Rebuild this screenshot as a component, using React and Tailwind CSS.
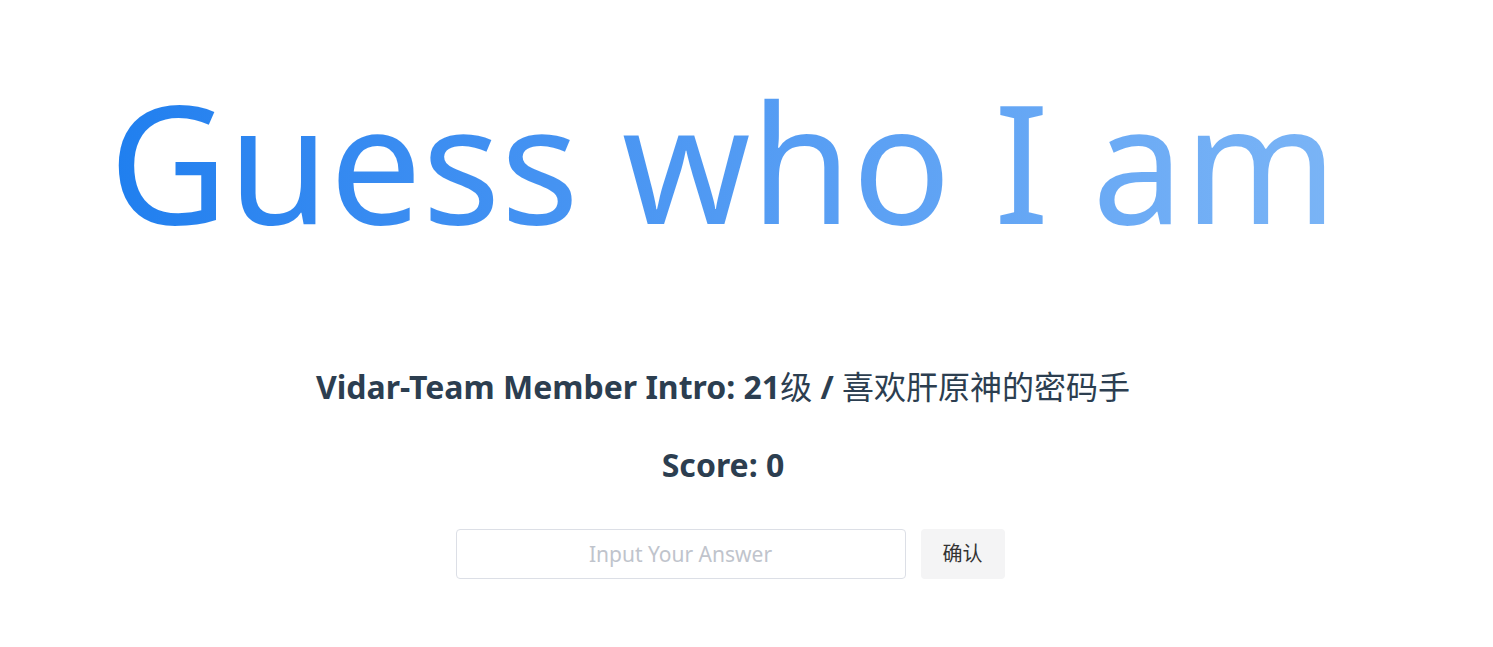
import React, { useState } from 'react';

const App = () => {
  const [answer, setAnswer] = useState('');

  return (
    <div
      className="w-[1446px] text-center text-[#2c3e50]"
      style={{ fontFamily: '"Noto Sans", "Noto Sans CJK SC", sans-serif' }}
    >
      <div className="pt-[63px] h-[300px]">
        <h1 className="text-[164px] leading-[1.2] font-normal inline-block bg-gradient-to-r from-[#1f7fef] to-[#7ab4f6] bg-clip-text text-transparent">
          Guess who I am
        </h1>
      </div>
      <h2 className="mt-[62px] text-[32px] font-bold leading-[50px]">
        Vidar-Team Member Intro: 21<span className="font-normal">级</span> / <span className="font-normal">喜欢肝原神的密码手</span>
      </h2>
      <h3 className="mt-[28px] text-[32px] font-bold leading-[50px]">Score: 0</h3>
      <div className="mt-[39px] ml-[14px] flex justify-center items-center gap-[15px]">
        <input
          value={answer}
          onChange={e => setAnswer(e.target.value)}
          placeholder="Input Your Answer"
          className="w-[450px] h-[50px] border border-[#dcdfe6] rounded-[4px] text-center text-[21px] text-[#606266] placeholder:text-[#c0c4cc] outline-none"
        />
        <button className="w-[84px] h-[50px] rounded-[4px] bg-[#f4f4f5] text-[20px] text-[#333]">
          确认
        </button>
      </div>
    </div>
  );
};

export default App;
